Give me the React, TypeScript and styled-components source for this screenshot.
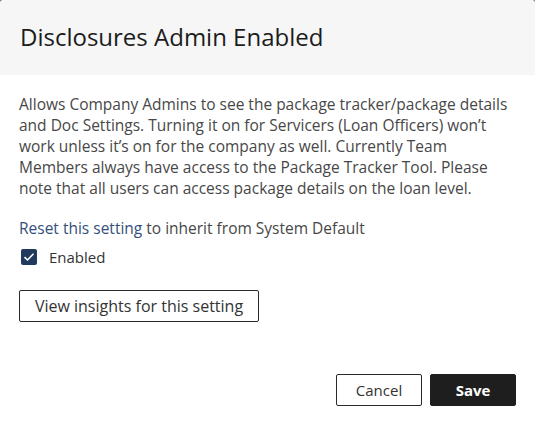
import React from "react"
import styled, { createGlobalStyle } from "styled-components"

const GlobalStyle = createGlobalStyle`
  html, body {
    margin: 0;
    padding: 0;
    background: #8a8a8a;
  }
  body {
    font-family: "Open Sans", "Noto Sans", sans-serif;
  }
`

const Modal = styled.div`
  width: 535px;
  height: 423px;
  background: #fff;
  border-radius: 4px 4px 0 0;
  display: flex;
  flex-direction: column;
  overflow: hidden;
`

const Header = styled.div`
  height: 75px;
  background: #f6f6f6;
  display: flex;
  align-items: center;
  padding: 0 20px;
  box-sizing: border-box;
`

const Title = styled.h2`
  margin: 0;
  font-size: 24px;
  font-weight: 400;
  color: #1c1c1c;
  padding-bottom: 2px;
`

const Body = styled.div`
  flex: 1;
  padding: 19px 19px 0;
  display: flex;
  flex-direction: column;
`

const Description = styled.p`
  margin: 0;
  font-size: 15.5px;
  line-height: 21px;
  color: #474747;
`

const ResetLine = styled.p`
  margin: 19px 0 0;
  font-size: 15.5px;
  line-height: 21px;
  color: #474747;
`

const ResetLink = styled.a`
  color: #33507a;
  text-decoration: none;
  cursor: pointer;
`

const CheckRow = styled.label`
  display: flex;
  align-items: center;
  gap: 12px;
  margin-top: 8px;
  padding-left: 2px;
  font-size: 15px;
  color: #333;
`

const Box = styled.span`
  width: 16px;
  height: 16px;
  border-radius: 2px;
  background: #1f3a5c;
  display: flex;
  align-items: center;
  justify-content: center;
`

const OutlineButton = styled.button<{ $width: number }>`
  width: ${(p) => p.$width}px;
  height: 32px;
  background: #fff;
  border: 1px solid #2a2a2a;
  border-radius: 2px;
  font-family: inherit;
  font-size: 15px;
  font-weight: 400;
  color: #333;
  padding: 0;
  cursor: pointer;
`

const InsightsButton = styled(OutlineButton)`
  margin-top: 23px;
  align-self: flex-start;
  font-size: 16px;
  font-weight: 500;
`

const Footer = styled.div`
  display: flex;
  justify-content: flex-end;
  gap: 8px;
  padding: 0 19px 17px;
`

const SaveButton = styled.button`
  width: 86px;
  height: 32px;
  background: #1e1e1e;
  border: 1px solid #1e1e1e;
  border-radius: 2px;
  font-family: inherit;
  font-size: 15px;
  font-weight: 700;
  color: #fff;
  cursor: pointer;
`

export default function App() {
  return (
    <>
      <GlobalStyle />
      <Modal>
        <Header>
          <Title>Disclosures Admin Enabled</Title>
        </Header>
        <Body>
          <Description>
            Allows Company Admins to see the package tracker/package details and Doc Settings.
            Turning it on for Servicers (Loan Officers) won’t work unless it’s on for the company
            as well. Currently Team Members always have access to the Package Tracker Tool. Please
            note that all users can access package details on the loan level.
          </Description>
          <ResetLine>
            <ResetLink>Reset this setting</ResetLink> to inherit from System Default
          </ResetLine>
          <CheckRow>
            <Box>
              <svg width="12" height="10" viewBox="0 0 12 10">
                <path d="M1.5 5.2 L4.5 8 L10.5 1.8" fill="none" stroke="#fff" strokeWidth="1.6" />
              </svg>
            </Box>
            Enabled
          </CheckRow>
          <InsightsButton $width={240}>View insights for this setting</InsightsButton>
        </Body>
        <Footer>
          <OutlineButton $width={86}>Cancel</OutlineButton>
          <SaveButton>Save</SaveButton>
        </Footer>
      </Modal>
    </>
  )
}
